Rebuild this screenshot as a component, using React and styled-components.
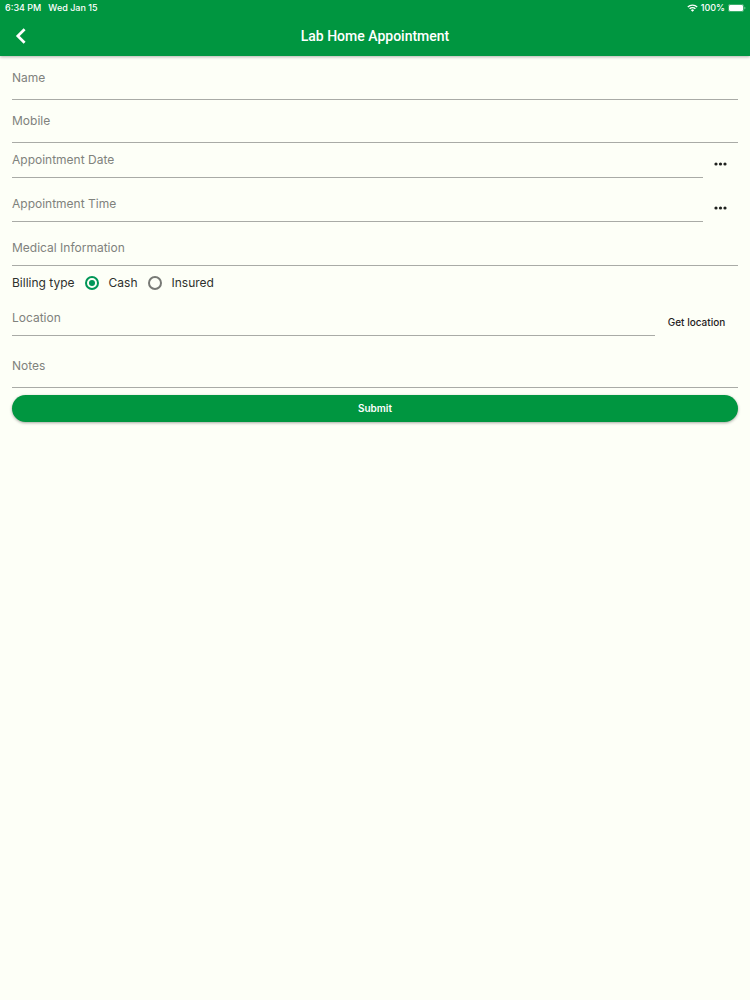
import React, { useState } from "react";
import styled, { createGlobalStyle } from "styled-components";

const GlobalStyle = createGlobalStyle`
  *, *::before, *::after {
    box-sizing: border-box;
  }

  body {
    margin: 0;
    min-height: 100vh;
    background-color: #fdfff7;
    color: #2e302d;
    font-family: Inter, "Liberation Sans", sans-serif;
  }

  button, input {
    font-family: inherit;
  }
`;

const Header = styled.header`
  background-color: #009640;
  color: #fff;
  box-shadow: 0 1px 3px rgba(0, 0, 0, 0.3);
`;

const StatusBar = styled.div`
  display: flex;
  justify-content: space-between;
  height: 15px;
  padding: 0 4px 0 5px;
  font-size: 9px;
  font-weight: 500;
  line-height: 15px;
`;

const StatusGroup = styled.div`
  display: flex;
  align-items: center;
  gap: ${(props) => props.$gap};
`;

const AppBar = styled.div`
  display: grid;
  grid-template-columns: 42px 1fr 42px;
  align-items: center;
  height: 41px;
`;

const BackButton = styled.button`
  display: flex;
  align-items: center;
  justify-content: center;
  height: 41px;
  padding: 0;
  border: none;
  background: none;
  color: inherit;
  cursor: pointer;
`;

const Title = styled.h1`
  margin: 0;
  font-family: Roboto, "Liberation Sans", sans-serif;
  font-size: 14px;
  font-weight: 500;
  line-height: 20px;
  text-align: center;
`;

const Form = styled.form`
  display: flex;
  flex-direction: column;
  padding: 1px 12px 12px;
`;

const Row = styled.div`
  display: flex;
  align-items: flex-end;
  margin-top: ${(props) => (props.$spaced ? "9px" : "0")};
`;

const TextField = styled.input`
  flex: 1;
  min-width: 0;
  height: ${(props) => (props.$tall ? "43px" : "35px")};
  padding: 0 0 2px;
  border: none;
  border-bottom: 1px solid #a9aba6;
  border-radius: 0;
  outline: none;
  background: none;
  color: #2e302d;
  font-size: 12px;

  &::placeholder {
    color: #80827d;
    opacity: 1;
  }

  &:focus {
    border-bottom-color: #009640;
  }
`;

const FlatButton = styled.button`
  display: flex;
  align-items: center;
  justify-content: center;
  width: ${(props) => props.$width};
  height: 28px;
  padding: 0;
  border: none;
  background: none;
  color: #1f211e;
  font-size: 10px;
  font-weight: 500;
  cursor: pointer;
`;

const Billing = styled.div`
  display: flex;
  align-items: center;
  height: 35px;
  padding-bottom: 2px;
  font-size: 12px;
`;

const RadioLabel = styled.label`
  display: flex;
  align-items: center;
  gap: 10px;
  margin-left: 10px;
  cursor: pointer;
`;

const Radio = styled.input`
  appearance: none;
  display: grid;
  place-content: center;
  width: 14px;
  height: 14px;
  margin: 0;
  border: 2px solid #777975;
  border-radius: 50%;
  cursor: pointer;

  &:checked {
    border-color: #009657;
  }

  &:checked::before {
    content: "";
    width: 6px;
    height: 6px;
    border-radius: 50%;
    background-color: #009657;
  }
`;

const SubmitButton = styled.button`
  height: 27px;
  margin-top: 7px;
  padding: 0 12px 1px;
  border: none;
  border-radius: 14px;
  background-color: #009640;
  box-shadow: 0 1px 3px rgba(0, 0, 0, 0.35);
  color: #fff;
  font-size: 10px;
  font-weight: 600;
  cursor: pointer;
`;

const BackIcon = () => (
  <svg width="12" height="16" viewBox="0 0 12 16" fill="none" aria-hidden="true">
    <path d="M9.6 1.2 2.8 8l6.8 6.8" stroke="currentColor" strokeWidth="2.7" />
  </svg>
);

const WifiIcon = () => (
  <svg width="11" height="8" viewBox="0 0 11 8" fill="none" aria-hidden="true">
    <path
      d="M.8 3a6.6 6.6 0 0 1 9.4 0M2.6 4.8a4.1 4.1 0 0 1 5.8 0"
      stroke="currentColor"
      strokeWidth="1.3"
    />
    <path d="M5.5 7.8 3.9 6.2a2.2 2.2 0 0 1 3.2 0z" fill="currentColor" />
  </svg>
);

const BatteryIcon = () => (
  <svg width="18" height="8" viewBox="0 0 18 8" aria-hidden="true">
    <rect x=".3" y=".3" width="15.4" height="7.4" rx="2" fill="none" stroke="#fff" strokeOpacity=".5" strokeWidth=".6" />
    <rect x="1" y="1" width="14" height="6" rx="1.3" fill="#fff" />
    <path d="M16.5 2.8c1.2.4 1.2 2 0 2.4z" fill="#fff" fillOpacity=".6" />
  </svg>
);

const DotsIcon = () => (
  <svg width="13" height="4" viewBox="0 0 13 4" fill="currentColor" aria-hidden="true">
    <circle cx="2" cy="2" r="1.6" />
    <circle cx="6.5" cy="2" r="1.6" />
    <circle cx="11" cy="2" r="1.6" />
  </svg>
);

const billingTypes = ["Cash", "Insured"];

function App() {
  const [values, setValues] = useState({});
  const [billing, setBilling] = useState("Cash");

  const field = (name, label) => ({
    name,
    placeholder: label,
    "aria-label": label,
    value: values[name] || "",
    onChange: (e) => setValues({ ...values, [name]: e.target.value }),
  });

  return (
    <>
      <GlobalStyle />
      <Header>
        <StatusBar>
          <StatusGroup $gap="7px">
            <span>6:34 PM</span>
            <span>Wed Jan 15</span>
          </StatusGroup>
          <StatusGroup $gap="3px">
            <WifiIcon />
            <span>100%</span>
            <BatteryIcon />
          </StatusGroup>
        </StatusBar>
        <AppBar>
          <BackButton type="button" aria-label="Back">
            <BackIcon />
          </BackButton>
          <Title>Lab Home Appointment</Title>
        </AppBar>
      </Header>
      <Form onSubmit={(e) => e.preventDefault()}>
        <Row>
          <TextField $tall type="text" {...field("name", "Name")} />
        </Row>
        <Row>
          <TextField $tall type="tel" {...field("mobile", "Mobile")} />
        </Row>
        <Row>
          <TextField type="text" {...field("date", "Appointment Date")} />
          <FlatButton type="button" $width="35px" aria-label="Choose date">
            <DotsIcon />
          </FlatButton>
        </Row>
        <Row $spaced>
          <TextField type="text" {...field("time", "Appointment Time")} />
          <FlatButton type="button" $width="35px" aria-label="Choose time">
            <DotsIcon />
          </FlatButton>
        </Row>
        <Row $spaced>
          <TextField type="text" {...field("medical", "Medical Information")} />
        </Row>
        <Billing role="radiogroup" aria-labelledby="billing-type">
          <span id="billing-type">Billing type</span>
          {billingTypes.map((type) => (
            <RadioLabel key={type}>
              <Radio
                type="radio"
                name="billing"
                value={type}
                checked={billing === type}
                onChange={() => setBilling(type)}
              />
              {type}
            </RadioLabel>
          ))}
        </Billing>
        <Row>
          <TextField type="text" {...field("location", "Location")} />
          <FlatButton type="button" $width="83px">
            Get location
          </FlatButton>
        </Row>
        <Row $spaced>
          <TextField $tall type="text" {...field("notes", "Notes")} />
        </Row>
        <SubmitButton type="submit">Submit</SubmitButton>
      </Form>
    </>
  );
}

export default App;
